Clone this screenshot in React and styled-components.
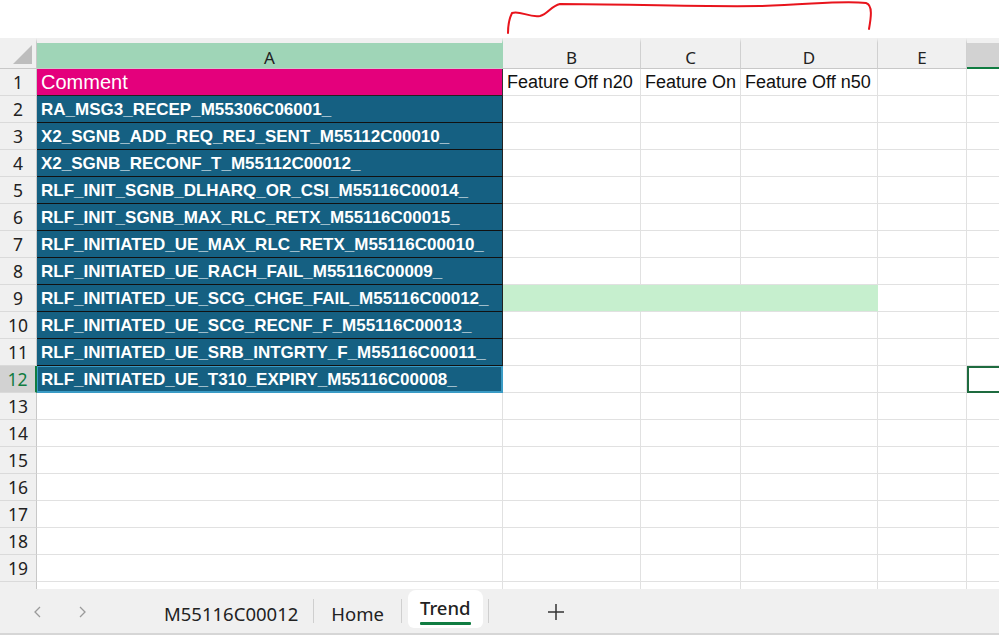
import React from "react";
import styled, { createGlobalStyle } from "styled-components";

const GlobalStyle = createGlobalStyle`
  html, body { margin: 0; padding: 0; background: #fff; }
  body { font-family: "Noto Sans", "Open Sans", sans-serif; overflow: hidden; }
`;

const COLS = [
  { key: "A", width: 466 },
  { key: "B", width: 138 },
  { key: "C", width: 100 },
  { key: "D", width: 137 },
  { key: "E", width: 89 },
  { key: "F", width: 60 },
];

const ROWS = [
  "RA_MSG3_RECEP_M55306C06001_",
  "X2_SGNB_ADD_REQ_REJ_SENT_M55112C00010_",
  "X2_SGNB_RECONF_T_M55112C00012_",
  "RLF_INIT_SGNB_DLHARQ_OR_CSI_M55116C00014_",
  "RLF_INIT_SGNB_MAX_RLC_RETX_M55116C00015_",
  "RLF_INITIATED_UE_MAX_RLC_RETX_M55116C00010_",
  "RLF_INITIATED_UE_RACH_FAIL_M55116C00009_",
  "RLF_INITIATED_UE_SCG_CHGE_FAIL_M55116C00012_",
  "RLF_INITIATED_UE_SCG_RECNF_F_M55116C00013_",
  "RLF_INITIATED_UE_SRB_INTGRTY_F_M55116C00011_",
  "RLF_INITIATED_UE_T310_EXPIRY_M55116C00008_",
];

const HEADERS = { B: "Feature Off n20", C: "Feature On", D: "Feature Off n50" };

const Page = styled.div`
  width: 999px;
  height: 635px;
  display: flex;
  flex-direction: column;
  position: relative;
  overflow: hidden;
`;

const TopSpace = styled.div`
  height: 38px;
  background: #fff;
  position: relative;
`;

const Scribble = styled.svg`
  position: absolute;
  left: 0;
  top: 0;
`;

const Sheet = styled.div`
  flex: 1;
  overflow: hidden;
  display: grid;
  grid-template-columns: 37px ${COLS.map((c) => c.width + "px").join(" ")} 1fr;
  grid-auto-rows: 27px;
  grid-template-rows: 31px;
  background: #fff;
`;

const Corner = styled.div`
  background: #f0f0f0;
  border-top: 5px solid #f0f0f0;
  border-right: 1px solid #c8c8c8;
  border-bottom: 1px solid #c8c8c8;
  position: relative;
  &::after {
    content: "";
    position: absolute;
    right: 4px;
    bottom: 4px;
    border-style: solid;
    border-width: 0 0 19px 19px;
    border-color: transparent transparent #bdbdbd transparent;
  }
`;

const ColHead = styled.div`
  background: ${(p) => (p.$tint === "green" ? "#9fd5b7" : p.$tint === "sel" ? "#d2d2d2" : "#f0f0f0")};
  border-top: 5px solid #f0f0f0;
  border-right: 1px solid ${(p) => (p.$tint === "green" ? "#9fd5b7" : "#d0d0d0")};
  border-bottom: ${(p) => (p.$tint === "sel" ? "2px solid #107c41" : "1px solid #c8c8c8")};
  display: flex;
  align-items: center;
  justify-content: center;
  padding-top: 3px;
  font-size: 17px;
  color: #222;
`;

const RowHead = styled.div`
  background: ${(p) => (p.$sel ? "#d2d2d2" : "#f0f0f0")};
  color: ${(p) => (p.$sel ? "#107c41" : "#222")};
  border-right: ${(p) => (p.$sel ? "2px solid #107c41" : "1px solid #c8c8c8")};
  border-bottom: 1px solid #dadada;
  display: flex;
  align-items: center;
  justify-content: center;
  font-size: 17.5px;
  box-sizing: border-box;
`;

const Cell = styled.div`
  box-sizing: border-box;
  border-right: 1px solid #e1e1e1;
  border-bottom: 1px solid #e1e1e1;
  display: flex;
  align-items: center;
  padding-left: 4px;
  padding-top: 1px;
  white-space: nowrap;
  overflow: visible;
  font-family: "Liberation Sans", Arial, sans-serif;
  font-size: 18px;
  color: #111;
  position: relative;

  ${(p) =>
    p.$kind === "title" &&
    `
    background: #e4007c;
    color: #fff;
    font-size: 20px;
    border-right: 1px solid #333;
    border-bottom: 1px solid #222;
  `}
  ${(p) =>
    p.$kind === "data" &&
    `
    background: #156082;
    color: #fff;
    font-weight: bold;
    font-size: 17px;
    border-right: 1px solid #222;
    border-bottom: 1px solid #111;
  `}
  ${(p) =>
    p.$kind === "lastdata" &&
    `
    background: #156082;
    color: #fff;
    font-weight: bold;
    font-size: 17px;
    box-shadow: inset 0 0 0 1px #3a9bc5;
    border-right: 1px solid #3a9bc5;
    border-bottom: 1px solid #3a9bc5;
  `}
  ${(p) => p.$good && `background: #c6efce; border-right-color: #c6efce;`}
  ${(p) => p.$active && `box-shadow: inset 0 0 0 2px #1e6b3f; border: none;`}
`;

const TabBar = styled.div`
  height: 46px;
  background: #f0f0f0;
  border-bottom: 2px solid #d6d6d6;
  box-sizing: border-box;
  display: flex;
  align-items: stretch;
  font-family: "Noto Sans", "Open Sans", sans-serif;
  font-size: 18.5px;
  color: #222;
`;

const NavArrow = styled.div`
  width: 45px;
  display: flex;
  align-items: center;
  justify-content: center;
  color: #9a9a9a;
  padding-top: 2px;
`;

const Spacer = styled.div`
  width: ${(p) => p.$w}px;
`;

const Tab = styled.div`
  display: flex;
  align-items: center;
  padding: 0 ${(p) => p.$pad || 14}px;
  position: relative;
  margin: ${(p) => (p.$active ? "1px 5px 5px 6px" : 0)};
  background: ${(p) => (p.$active ? "#fff" : "transparent")};
  border-radius: ${(p) => (p.$active ? "8px 8px 6px 6px" : 0)};
  font-weight: ${(p) => (p.$active ? 500 : 400)};
  & > span {
    position: relative;
    top: ${(p) => (p.$active ? -2 : 2)}px;
  }
  ${(p) =>
    p.$active &&
    `
    & > span::after {
      content: "";
      position: absolute;
      left: 0;
      right: 0;
      bottom: -5px;
      height: 3px;
      background: #107c41;
      border-radius: 1px;
    }
  `}
`;

const Divider = styled.div`
  width: 1px;
  background: #cfcfcf;
  margin: 10px 0 10px;
`;

const AddTab = styled.div`
  width: 134px;
  display: flex;
  align-items: center;
  justify-content: center;
  padding-top: 2px;
`;

function Chevron({ dir }) {
  const d = dir === "left" ? "M9 3 L4 8 L9 13" : "M4 3 L9 8 L4 13";
  return (
    <svg width="13" height="16" viewBox="0 0 13 16">
      <path d={d} fill="none" stroke="#9a9a9a" strokeWidth="1.3" />
    </svg>
  );
}

function Plus() {
  return (
    <svg width="20" height="20" viewBox="0 0 20 20">
      <path d="M10 2 V18 M2 10 H18" stroke="#333" strokeWidth="1.5" />
    </svg>
  );
}

export default function App() {
  const rowCount = 20;
  const rows = [];
  for (let r = 1; r <= rowCount; r++) {
    const sel = r === 12;
    rows.push(
      <RowHead key={"h" + r} $sel={sel}>
        {r < rowCount ? r : ""}
      </RowHead>
    );
    COLS.forEach((c) => {
      let kind;
      let text = "";
      if (c.key === "A" && r === 1) {
        kind = "title";
        text = "Comment";
      } else if (c.key === "A" && r >= 2 && r <= 12) {
        kind = r === 12 ? "lastdata" : "data";
        text = ROWS[r - 2];
      } else if (r === 1 && HEADERS[c.key]) {
        text = HEADERS[c.key];
      }
      const good = r === 9 && ["B", "C", "D"].includes(c.key);
      const active = r === 12 && c.key === "F";
      rows.push(
        <Cell key={c.key + r} $kind={kind} $good={good} $active={active}>
          {text}
        </Cell>
      );
    });
    rows.push(<Cell key={"z" + r} />);
  }

  return (
    <Page>
      <GlobalStyle />
      <TopSpace>
        <Scribble width="999" height="38" viewBox="0 0 999 38">
          <path
            d="M508 33 C508 26 509 19 512 13 C520 10 529 18 540 16 C548 14 551 6 560 4 C620 4 700 7 760 6 C810 5 840 0 866 3 C873 5 871 18 869 29"
            fill="none"
            stroke="#e8141c"
            strokeWidth="2"
            strokeLinecap="round"
          />
        </Scribble>
      </TopSpace>
      <Sheet>
        <Corner />
        {COLS.map((c) => (
          <ColHead key={c.key} $tint={c.key === "A" ? "green" : c.key === "F" ? "sel" : ""}>
            {c.key === "F" ? "" : c.key}
          </ColHead>
        ))}
        <ColHead $tint="sel" />
        {rows}
      </Sheet>
      <TabBar>
        <Spacer $w={15} />
        <NavArrow>
          <Chevron dir="left" />
        </NavArrow>
        <NavArrow>
          <Chevron dir="right" />
        </NavArrow>
        <Spacer $w={44} />
        <Tab $pad={15}>
          <span>M55116C00012</span>
        </Tab>
        <Divider />
        <Tab $pad={17}>
          <span>Home</span>
        </Tab>
        <Divider />
        <Tab $active $pad={12}>
          <span>Trend</span>
        </Tab>
        <Divider />
        <AddTab>
          <Plus />
        </AddTab>
      </TabBar>
    </Page>
  );
}
